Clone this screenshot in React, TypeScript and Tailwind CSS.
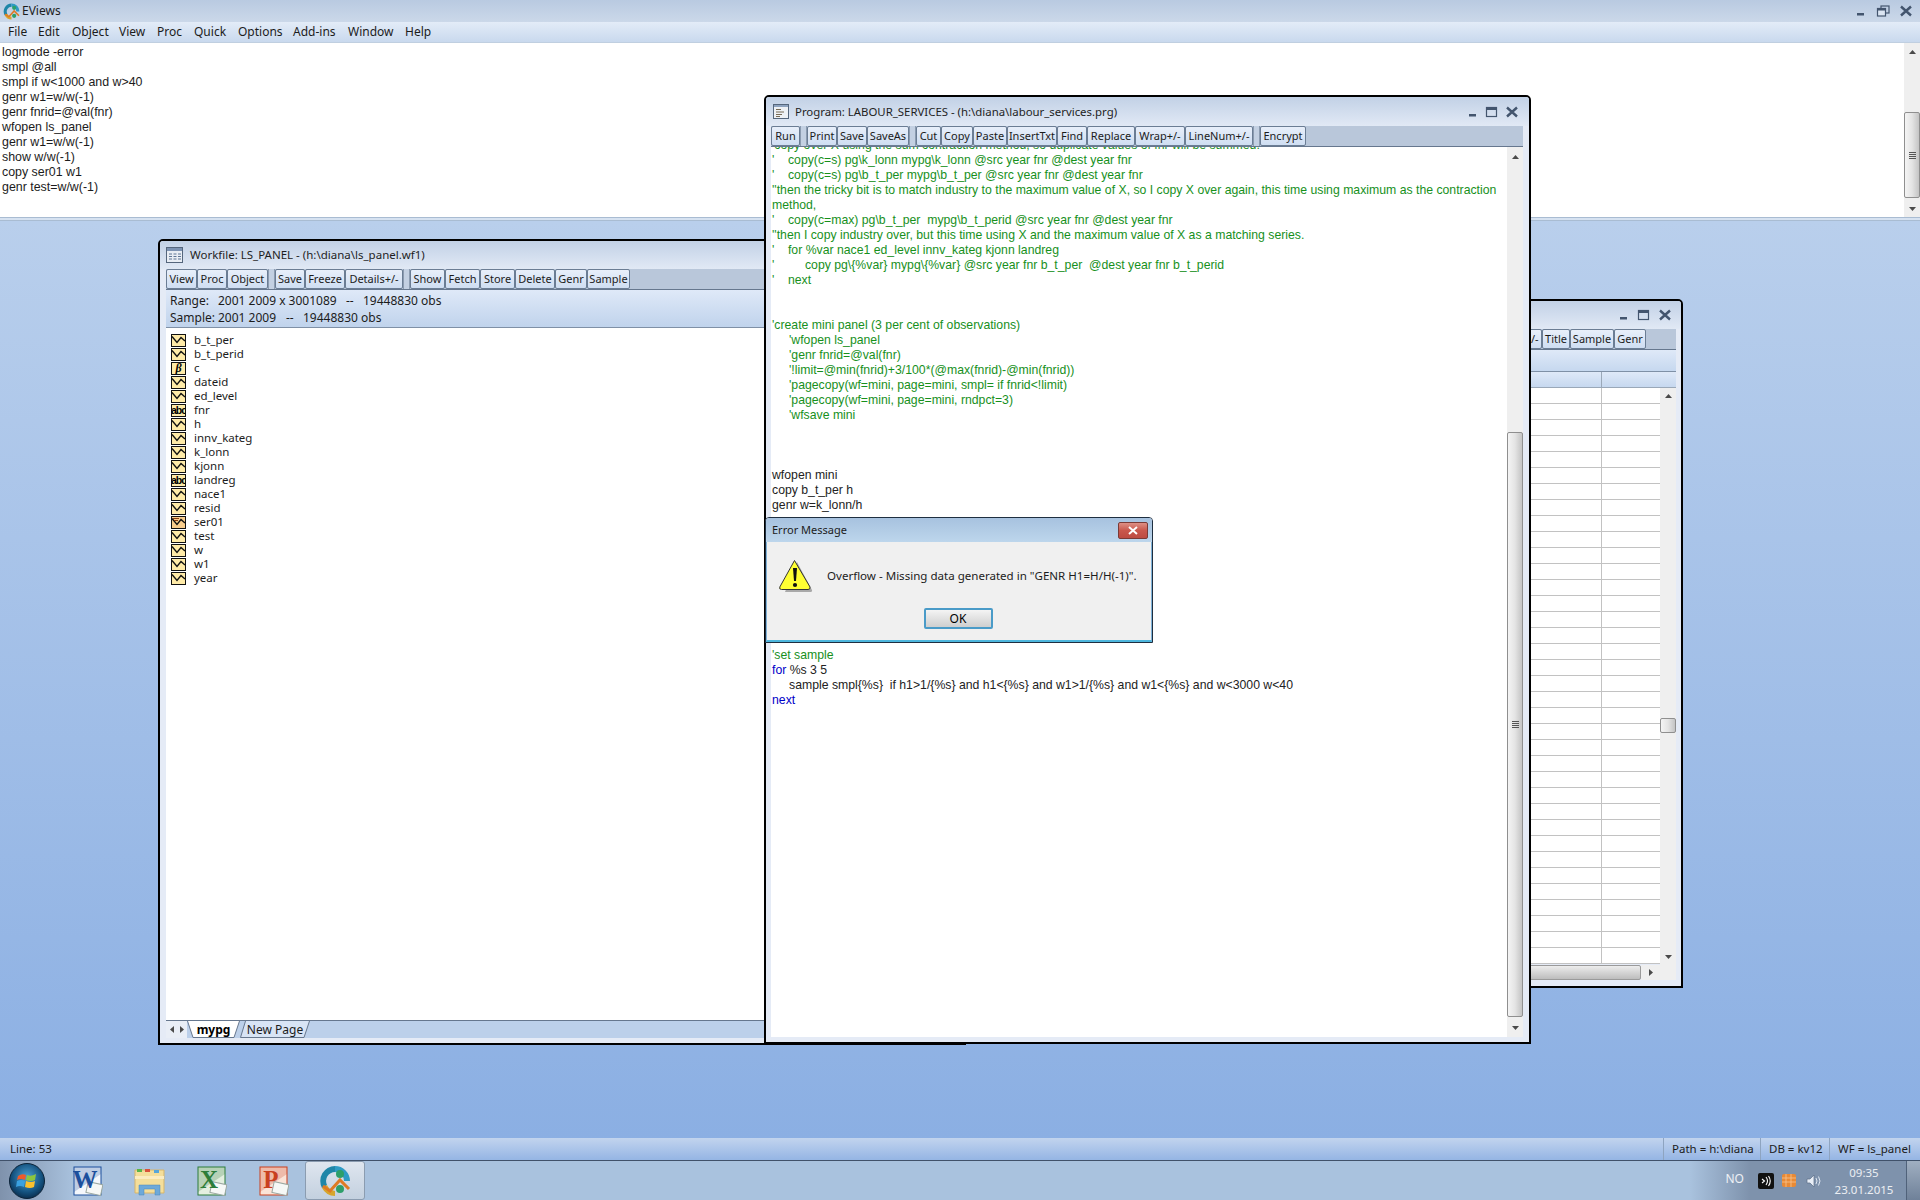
import type { FC, ReactNode } from "react";

const uiFont = "font-['Noto_Sans',sans-serif]";
const codeFont = "font-['Liberation_Sans',sans-serif]";

const menuItems: [string, string][] = [
  ["File", "w-[30px]"],
  ["Edit", "w-[34px]"],
  ["Object", "w-[47px]"],
  ["View", "w-[38px]"],
  ["Proc", "w-[37px]"],
  ["Quick", "w-[44px]"],
  ["Options", "w-[55px]"],
  ["Add-ins", "w-[55px]"],
  ["Window", "w-[57px]"],
  ["Help", "w-[40px]"],
];

const consoleLines = [
  "logmode -error",
  "smpl @all",
  "smpl if w<1000 and w>40",
  "genr w1=w/w(-1)",
  "genr fnrid=@val(fnr)",
  "wfopen ls_panel",
  "genr w1=w/w(-1)",
  "show w/w(-1)",
  "copy ser01 w1",
  "genr test=w/w(-1)",
];

type Btn = [string, string] | "gap";

const workfileButtons: Btn[] = [
  ["View", "w-[31px]"],
  ["Proc", "w-[30px]"],
  ["Object", "w-[41px]"],
  "gap",
  ["Save", "w-[30px]"],
  ["Freeze", "w-[40px]"],
  ["Details+/-", "w-[58px]"],
  "gap",
  ["Show", "w-[35px]"],
  ["Fetch", "w-[35px]"],
  ["Store", "w-[35px]"],
  ["Delete", "w-[40px]"],
  ["Genr", "w-[32px]"],
  ["Sample", "w-[43px]"],
];

const programButtons: Btn[] = [
  ["Run", "w-[29px]"],
  "gap",
  ["Print", "w-[30px]"],
  ["Save", "w-[30px]"],
  ["SaveAs", "w-[42px]"],
  "gap",
  ["Cut", "w-[25px]"],
  ["Copy", "w-[32px]"],
  ["Paste", "w-[34px]"],
  ["InsertTxt", "w-[50px]"],
  ["Find", "w-[30px]"],
  ["Replace", "w-[48px]"],
  ["Wrap+/-", "w-[50px]"],
  ["LineNum+/-", "w-[68px]"],
  "gap",
  ["Encrypt", "w-[46px]"],
];

const backButtons: Btn[] = [
  ["Details+/-", "w-[56px]"],
  ["Title", "w-[28px]"],
  ["Sample", "w-[44px]"],
  ["Genr", "w-[32px]"],
];

const objects: [string, "series" | "coef" | "alpha" | "modified"][] = [
  ["b_t_per", "series"],
  ["b_t_perid", "series"],
  ["c", "coef"],
  ["dateid", "series"],
  ["ed_level", "series"],
  ["fnr", "alpha"],
  ["h", "series"],
  ["innv_kateg", "series"],
  ["k_lonn", "series"],
  ["kjonn", "series"],
  ["landreg", "alpha"],
  ["nace1", "series"],
  ["resid", "series"],
  ["ser01", "modified"],
  ["test", "series"],
  ["w", "series"],
  ["w1", "series"],
  ["year", "series"],
];

type CodeKind = "comment" | "plain" | "empty";

const codeLines: [string, CodeKind][] = [
  ["'copy over X using the sum contraction method, so duplicate values of fnr will be summed.", "comment"],
  ["'    copy(c=s) pg\\k_lonn mypg\\k_lonn @src year fnr @dest year fnr", "comment"],
  ["'    copy(c=s) pg\\b_t_per mypg\\b_t_per @src year fnr @dest year fnr", "comment"],
  ["''then the tricky bit is to match industry to the maximum value of X, so I copy X over again, this time using maximum as the contraction", "comment"],
  ["method,", "comment"],
  ["'    copy(c=max) pg\\b_t_per  mypg\\b_t_perid @src year fnr @dest year fnr", "comment"],
  ["''then I copy industry over, but this time using X and the maximum value of X as a matching series.", "comment"],
  ["'    for %var nace1 ed_level innv_kateg kjonn landreg", "comment"],
  ["'         copy pg\\{%var} mypg\\{%var} @src year fnr b_t_per  @dest year fnr b_t_perid", "comment"],
  ["'    next", "comment"],
  ["", "empty"],
  ["", "empty"],
  ["'create mini panel (3 per cent of observations)", "comment"],
  ["     'wfopen ls_panel", "comment"],
  ["     'genr fnrid=@val(fnr)", "comment"],
  ["     '!limit=@min(fnrid)+3/100*(@max(fnrid)-@min(fnrid))", "comment"],
  ["     'pagecopy(wf=mini, page=mini, smpl= if fnrid<!limit)", "comment"],
  ["     'pagecopy(wf=mini, page=mini, rndpct=3)", "comment"],
  ["     'wfsave mini", "comment"],
  ["", "empty"],
  ["", "empty"],
  ["", "empty"],
  ["wfopen mini", "plain"],
  ["copy b_t_per h", "plain"],
  ["genr w=k_lonn/h", "plain"],
  ["", "empty"],
  ["", "empty"],
  ["", "empty"],
  ["", "empty"],
  ["", "empty"],
  ["", "empty"],
  ["", "empty"],
  ["", "empty"],
  ["", "empty"],
  ["'set sample", "comment"],
];

const GripLines: FC = () => (
  <div className="flex flex-col gap-[1px] w-[7px]">
    <div className="h-[1px] bg-[#555]" />
    <div className="h-[1px] bg-[#555]" />
    <div className="h-[1px] bg-[#555]" />
    <div className="h-[1px] bg-[#555]" />
  </div>
);

const Arrow: FC<{ dir: "up" | "down" | "left" | "right" }> = ({ dir }) => {
  const pts = {
    up: "1,6 4.5,2 8,6",
    down: "1,3 8,3 4.5,7",
    left: "6,1 6,8 2,4.5",
    right: "3,1 3,8 7,4.5",
  }[dir];
  return (
    <svg width="9" height="9" viewBox="0 0 9 9">
      <polygon points={pts} fill="#4a4a4a" />
    </svg>
  );
};

// vertical scroll bar, the thumb spot is given as spacer + thumb classes
const VScroll: FC<{ arrowH: string; spacer: string; thumb: string; grip?: boolean }> = ({
  arrowH,
  spacer,
  thumb,
  grip = true,
}) => (
  <div className="w-[16px] shrink-0 flex flex-col bg-[#efefef]">
    <div className={`${arrowH} shrink-0 flex items-center justify-center`}>
      <Arrow dir="up" />
    </div>
    <div className={`${spacer} shrink-0`} />
    <div
      className={`${thumb} shrink-0 flex items-center justify-center border border-[#8f8f8f] rounded-[2px] bg-gradient-to-r from-[#f4f4f4] via-[#e4e4e4] to-[#c4c4c4]`}
    >
      {grip && <GripLines />}
    </div>
    <div className="flex-1" />
    <div className={`${arrowH} shrink-0 flex items-center justify-center`}>
      <Arrow dir="down" />
    </div>
  </div>
);

const WinControls: FC<{ maxRestore?: boolean; className: string }> = ({ maxRestore, className }) => (
  <div className={`flex items-center ${className}`}>
    <svg width="12" height="12" viewBox="0 0 12 12">
      <rect x="2" y="8" width="7" height="2.5" fill="#43556e" />
    </svg>
    <svg width="14" height="12" viewBox="0 0 14 12" className="ml-[6px]">
      {maxRestore ? (
        <>
          <rect x="5" y="1" width="8" height="7" fill="none" stroke="#43556e" strokeWidth="1.2" />
          <rect x="1.5" y="3.5" width="8" height="7.5" fill="#dbe5f2" stroke="#43556e" strokeWidth="1.2" />
          <rect x="1.5" y="3.5" width="8" height="2" fill="#43556e" />
        </>
      ) : (
        <>
          <rect x="1.5" y="1.5" width="10" height="9" fill="none" stroke="#43556e" strokeWidth="1.2" />
          <rect x="1.5" y="1.5" width="10" height="2.5" fill="#43556e" />
        </>
      )}
    </svg>
    <svg width="14" height="12" viewBox="0 0 14 12" className="ml-[6px]">
      <path d="M2 1.5 L12 10.5 M12 1.5 L2 10.5" stroke="#43556e" strokeWidth="2.4" />
    </svg>
  </div>
);

const Toolbar: FC<{ buttons: Btn[]; className?: string }> = ({ buttons, className = "" }) => (
  <div className={`h-[21px] shrink-0 flex items-stretch bg-[#b9c7da] border-b border-[#66778e] ${className}`}>
    {buttons.map((b, i) =>
      b === "gap" ? (
        <div key={i} className="w-[7px] shrink-0 border-x border-[#8b9bb0] bg-[#c3d0e2]" />
      ) : (
        <div
          key={i}
          className={`${b[1]} shrink-0 flex items-center justify-center overflow-hidden whitespace-nowrap rounded-[2px] border border-[#6b7d94] bg-gradient-to-b from-[#e8effa] to-[#cfdef2] text-[11px] text-[#1c1c1c] ${uiFont}`}
        >
          {b[0]}
        </div>
      ),
    )}
  </div>
);

const FileIcon: FC = () => (
  <svg width="17" height="16" viewBox="0 0 17 16">
    <rect x="0.5" y="0.5" width="16" height="15" fill="#e8edf4" stroke="#55667c" />
    <rect x="1" y="1" width="15" height="3" fill="#7d93b3" />
    <path d="M3 7h3M3 9.5h3M3 12h3M7.5 7h3M7.5 9.5h3M7.5 12h3M12 7h3M12 9.5h3M12 12h3" stroke="#5f7696" />
  </svg>
);

const ProgramIcon: FC = () => (
  <svg width="16" height="15" viewBox="0 0 16 15">
    <rect x="0.5" y="0.5" width="15" height="14" fill="#eef1f5" stroke="#55667c" />
    <rect x="1" y="1" width="14" height="2" fill="#8ea3bf" />
    <path d="M3 5.5h5M3 8h8M3 10.5h6M3 12.5h4" stroke="#776a55" />
  </svg>
);

const ObjectIcon: FC<{ kind: "series" | "coef" | "alpha" | "modified" }> = ({ kind }) => {
  if (kind === "series" || kind === "modified") {
    return (
      <svg width="15" height="13" viewBox="0 0 15 13" className="shrink-0">
        <rect x="0.5" y="0.5" width="14" height="12" fill={kind === "modified" ? "#f9cd8c" : "#ffeba8"} stroke="#111" />
        <path d="M1 2.5 L6 8.5 L10 3.5 L14 7" fill="none" stroke="#111" strokeWidth="1.4" />
        {kind === "modified" && <path d="M2 2.5h6M3 4.5h4" stroke="#8a3d10" />}
      </svg>
    );
  }
  return (
    <div
      className={`w-[15px] h-[13px] shrink-0 flex items-center justify-center overflow-hidden border border-[#111] bg-[#ffeba8] text-black font-bold leading-none ${
        kind === "coef"
          ? "text-[12px] font-['Liberation_Serif',serif] italic"
          : "text-[10.5px] font-['Liberation_Sans',sans-serif] tracking-[-1px]"
      }`}
    >
      {kind === "coef" ? "β" : "abc"}
    </div>
  );
};

const EViewsLogo: FC<{ size: number }> = ({ size }) => (
  <svg width={size} height={size} viewBox="0 0 32 32">
    <path d="M16 1 A15 15 0 0 0 3 23 L8 20 A9 9 0 0 1 16 7 Z" fill="#1f86a8" />
    <path d="M3 23 A15 15 0 0 0 16 31 L16 26 A10 10 0 0 1 8 20 Z" fill="#d7a52c" />
    <path d="M16 1 A15 15 0 0 1 31 16 L25 16 A9 9 0 0 0 16 7 Z" fill="#2e9bc4" />
    <circle cx="21" cy="9" r="4" fill="#2d9f6a" />
    <circle cx="21" cy="24" r="4" fill="#2d9f6a" />
    <path d="M4 21 L11 26 L21 15 L30 24" fill="none" stroke="#de7a24" strokeWidth="3" />
  </svg>
);

const OfficeIcon: FC<{ letter: string; color: string; light: string }> = ({ letter, color, light }) => (
  <svg width="30" height="30" viewBox="0 0 30 30">
    <rect x="1" y="1" width="27" height="28" fill={light} stroke={color} />
    <path d="M1 1 H28 V8 L1 26 Z" fill={color} opacity="0.25" />
    <rect x="14" y="17" width="15" height="11" fill="#f6f8f6" stroke="#9aa7a0" transform="rotate(12 21 22)" />
    <text x="12" y="22" textAnchor="middle" fontFamily="Liberation Serif, serif" fontWeight="700" fontSize="25" fill={color}>
      {letter}
    </text>
  </svg>
);

const FolderIcon: FC = () => (
  <svg width="32" height="30" viewBox="0 0 32 30">
    <path d="M1 4 H30 V27 H1 Z" fill="#f4de9a" stroke="#d6b56a" />
    <rect x="3" y="3" width="5" height="3" fill="#58b54a" />
    <rect x="11" y="3" width="5" height="3" fill="#d9523c" />
    <rect x="20" y="4" width="5" height="3" fill="#58a6d8" />
    <path d="M1 10 H30 V13 H1 Z" fill="#fbecc0" />
    <path d="M5 29 V19 H26 V29 H21 V23 H10 V29 Z" fill="#6ea9d9" stroke="#4a86b8" strokeWidth="0.5" />
  </svg>
);

const StartOrb: FC = () => (
  <svg width="36" height="36" viewBox="0 0 36 36">
    <defs>
      <radialGradient id="orb" cx="50%" cy="40%" r="60%">
        <stop offset="0%" stopColor="#4fa3d6" />
        <stop offset="70%" stopColor="#14527f" />
        <stop offset="100%" stopColor="#0b2f4f" />
      </radialGradient>
    </defs>
    <circle cx="18" cy="18" r="17.5" fill="url(#orb)" stroke="#0c2338" />
    <path d="M9 13 Q13 10 17 12 L16 17 Q12 15 8 17 Z" fill="#ef5a2a" />
    <path d="M18 12 Q22 14 27 11 L26 17 Q22 19 17 17 Z" fill="#8cc63f" />
    <path d="M8 18 Q12 16 16 18 L15 24 Q11 22 7 24 Z" fill="#3aa1e0" />
    <path d="M17 18 Q22 20 26 18 L25 24 Q21 26 16 24 Z" fill="#fbc02d" />
  </svg>
);

// sheet tab of the workfile, slanted edges are a small svg drawn behind the label
const PageTab: FC<{ label: string; width: number; d: string; fill: string; className: string }> = ({
  label,
  width,
  d,
  fill,
  className,
}) => (
  <div className={`relative shrink-0 flex items-center justify-center h-[17px] ${className}`} style={{ width }}>
    <svg width={width} height="17" className="absolute inset-0">
      <path d={d} fill={fill} stroke="#66778e" />
    </svg>
    <span className="relative">{label}</span>
  </div>
);

const Frame: FC<{ className: string; children: ReactNode }> = ({ className, children }) => (
  <div
    className={`absolute flex flex-col border-2 border-black rounded-t-[5px] bg-[#e5ebf6] overflow-hidden ${className}`}
  >
    {children}
  </div>
);

const WorkfileWindow: FC = () => (
  <Frame className="left-[158px] top-[18px] w-[808px] h-[806px]">
    <div className="h-[28px] shrink-0 flex items-center pl-[6px] bg-gradient-to-b from-[#c2d1e6] to-[#e1e9f5]">
      <FileIcon />
      <span className={`ml-[7px] text-[11.5px] text-[#1e1e1e] whitespace-nowrap ${uiFont}`}>
        Workfile: LS_PANEL - (h:\diana\ls_panel.wf1)
      </span>
    </div>
    <div className="flex-1 flex flex-col pl-[6px] pr-[6px] min-h-0">
      <Toolbar buttons={workfileButtons} />
      <div
        className={`h-[38px] shrink-0 flex flex-col justify-center pl-[4px] bg-gradient-to-b from-[#dfe9f8] to-[#c0d3ec] border-b border-[#7f90a6] text-[12px] leading-[17px] text-[#1c1c1c] ${uiFont}`}
      >
        <div className="flex whitespace-pre">
          <span className="w-[48px]">Range:</span>
          <span className="w-[128px]">2001 2009 x 3001089</span>
          <span className="w-[17px]">--</span>
          <span>19448830 obs</span>
        </div>
        <div className="flex whitespace-pre">
          <span className="w-[48px]">Sample:</span>
          <span className="w-[68px]">2001 2009</span>
          <span className="w-[17px]">--</span>
          <span>19448830 obs</span>
        </div>
      </div>
      <div className="flex-1 bg-white pt-[5px] pl-[5px] min-h-0">
        {objects.map(([name, kind]) => (
          <div key={name} className="h-[14px] flex items-center gap-[8px]">
            <ObjectIcon kind={kind} />
            <span className={`text-[11.5px] text-[#1c1c1c] ${uiFont}`}>{name}</span>
          </div>
        ))}
      </div>
      <div className="h-[18px] shrink-0 flex items-start bg-[#bcd0ea] border-t border-[#66778e]">
        <div className="w-[21px] h-[17px] shrink-0 flex items-center justify-center bg-[#e9eef6]">
          <Arrow dir="left" />
          <Arrow dir="right" />
        </div>
        <PageTab
          label="mypg"
          width={53}
          d="M0.5 0 L6 16.5 H47 L52.5 0"
          fill="#ffffff"
          className={`text-[12px] font-bold text-black ${uiFont}`}
        />
        <PageTab
          label="New Page"
          width={70}
          d="M5.5 0 L0.5 16.5 H64 L69.5 0"
          fill="#d8e4f5"
          className={`text-[12px] text-[#1c1c1c] ${uiFont}`}
        />
      </div>
      <div className="h-[5px] shrink-0" />
    </div>
  </Frame>
);

const BackWindow: FC = () => (
  <Frame className="left-[1000px] top-[78px] w-[683px] h-[689px]">
    <div className="h-[28px] shrink-0 flex items-center justify-end bg-gradient-to-b from-[#c2d1e6] to-[#e1e9f5]">
      <WinControls className="pr-[9px] gap-[1px]" />
    </div>
    <div className="flex-1 flex flex-col pl-[6px] pr-[5px] min-h-0">
      <Toolbar buttons={backButtons} className="justify-end pr-[30px]" />
      <div className="h-[22px] shrink-0 bg-gradient-to-b from-[#dfe9f8] to-[#c6d8ef] border-b border-[#7f90a6]" />
      <div className="h-[16px] shrink-0 flex bg-gradient-to-b from-[#dfe9f8] to-[#c6d8ef] border-b border-[#9aa8b8]">
        <div className="flex-1 border-r border-[#9aa8b8]" />
        <div className="w-[74px]" />
      </div>
      <div className="flex-1 flex min-h-0">
        <div className="flex-1 flex flex-col min-w-0">
          {Array.from({ length: 36 }, (_, i) => (
            <div key={i} className="h-[16px] shrink-0 flex bg-white border-b border-[#c2c2c2]">
              <div className="flex-1 border-r border-[#c2c2c2]" />
              <div className="w-[58px]" />
            </div>
          ))}
        </div>
        <VScroll arrowH="h-[17px]" spacer="h-[313px]" thumb="h-[15px]" grip={false} />
      </div>
      <div className="h-[15px] shrink-0 flex">
        <div className="flex-1 rounded-[2px] border border-[#9a9a9a] bg-gradient-to-b from-[#ededed] to-[#bdbdbd]" />
        <div className="w-[19px] flex items-center justify-center bg-[#efefef]">
          <Arrow dir="right" />
        </div>
        <div className="w-[16px] bg-[#efefef]" />
      </div>
      <div className="h-[6px] shrink-0" />
    </div>
  </Frame>
);

const ProgramWindow: FC = () => (
  <Frame className="left-[764px] top-[-126px] w-[767px] h-[949px]">
    <div className="h-[29px] shrink-0 flex items-center pl-[7px] bg-gradient-to-b from-[#c2d1e6] to-[#e1e9f5]">
      <ProgramIcon />
      <span className={`ml-[6px] text-[11.4px] text-[#1e1e1e] whitespace-nowrap ${uiFont}`}>
        Program: LABOUR_SERVICES - (h:\diana\labour_services.prg)
      </span>
      <WinControls className="ml-auto pr-[10px]" />
    </div>
    <div className="flex-1 flex flex-col pl-[5px] pr-[6px] min-h-0">
      <Toolbar buttons={programButtons} />
      <div className="flex-1 flex min-h-0">
        <div className={`flex-1 bg-white overflow-hidden pl-[1px] text-[12.25px] leading-[15px] whitespace-pre ${codeFont}`}>
          <div className="mt-[-9px]">
            {codeLines.map(([text, kind], i) => (
              <div key={i} className={`h-[15px] ${kind === "comment" ? "text-[#17901c]" : "text-[#222]"}`}>
                {text}
              </div>
            ))}
            <div className="h-[15px] text-[#222]">
              <span className="text-[#0000c8]">for</span> %s 3 5
            </div>
            <div className="h-[15px] text-[#222]">
              {"     sample smpl{%s}  if h1>1/{%s} and h1<{%s} and w1>1/{%s} and w1<{%s} and w<3000 w<40"}
            </div>
            <div className="h-[15px] text-[#0000c8]">next</div>
          </div>
        </div>
        <VScroll arrowH="h-[21px]" spacer="h-[264px]" thumb="h-[585px]" />
      </div>
      <div className="h-[5px] shrink-0" />
    </div>
  </Frame>
);

const ErrorDialog: FC = () => (
  <div className="absolute left-[765px] top-[296px] w-[388px] h-[126px] flex flex-col border border-[#1f2f40] rounded-t-[4px] overflow-hidden bg-[#f0f0f0]">
    <div className="h-[24px] shrink-0 flex items-center pl-[6px] bg-gradient-to-b from-[#a7c2df] to-[#bdd6ec]">
      <span className={`text-[11px] text-[#1c1c1c] ${uiFont}`}>Error Message</span>
      <div className="ml-auto mr-[4px] w-[30px] h-[17px] flex items-center justify-center rounded-[2px] border border-[#7b3a36] bg-gradient-to-b from-[#dd8f85] via-[#c9574c] to-[#bd4b42]">
        <svg width="10" height="9" viewBox="0 0 10 9">
          <path d="M1 1 L9 8 M9 1 L1 8" stroke="#fff" strokeWidth="2" />
        </svg>
      </div>
    </div>
    <div className="flex-1 flex flex-col items-stretch border-x border-b-2 border-x-[#7fb2d8] border-b-[#4db6dd]">
      <div className="flex items-center pl-[12px] pt-[17px]">
        <svg width="34" height="34" viewBox="0 0 34 34" className="shrink-0">
          <path d="M18 3 L33 31 Q33.5 33 31 33 L6 33 Z" fill="#8a8a8a" opacity="0.7" />
          <path d="M15.5 1.5 L31 28 Q31.5 30.5 29 30.5 L2.5 30.5 Q0 30.5 0.8 28 Z" fill="#ffff33" stroke="#333" />
          <path d="M14 9 H18 L17 22 H15 Z" fill="#111" />
          <circle cx="16" cy="26" r="2.1" fill="#111" />
        </svg>
        <span className={`ml-[14px] text-[11.55px] text-[#1c1c1c] whitespace-nowrap ${uiFont}`}>
          Overflow - Missing data generated in "GENR H1=H/H(-1)".
        </span>
      </div>
      <div className="mt-[15px] flex justify-center pr-[2px]">
        <div
          className={`w-[69px] h-[21px] flex items-center justify-center rounded-[2px] border-2 border-[#4a9bc8] bg-gradient-to-b from-[#f4f4f4] to-[#cfcfcf] text-[12px] text-black ${uiFont}`}
        >
          OK
        </div>
      </div>
    </div>
  </div>
);

const App: FC = () => (
  <div className={`w-[1920px] h-[1200px] flex flex-col overflow-hidden ${uiFont}`}>
    <div className="h-[22px] shrink-0 flex items-center pl-[3px] bg-gradient-to-b from-[#b9cae1] to-[#cbd8e9]">
      <EViewsLogo size={17} />
      <span className="ml-[2px] text-[12px] text-[#1c1c1c]">EViews</span>
      <WinControls maxRestore className="ml-auto pr-[7px] gap-[3px]" />
    </div>
    <div className="h-[21px] shrink-0 flex items-center pl-[8px] bg-gradient-to-b from-[#e3ecf8] to-[#c9d9ee] border-b border-[#c0cfe0]">
      {menuItems.map(([label, width]) => (
        <span key={label} className={`${width} text-[12px] text-[#1c1c1c]`}>
          {label}
        </span>
      ))}
    </div>
    <div className="h-[174px] shrink-0 flex bg-white">
      <div className={`flex-1 pt-[2px] pl-[2px] text-[12.4px] leading-[15px] text-[#1c1c1c] ${codeFont}`}>
        {consoleLines.map((line, i) => (
          <div key={i}>{line}</div>
        ))}
      </div>
      <VScroll arrowH="h-[18px]" spacer="h-[51px]" thumb="h-[86px]" />
    </div>
    <div className="h-[4px] shrink-0 bg-[#d6e2f1] border-y border-[#a9bcd2]" />

    <div className="relative flex-1 z-10 bg-gradient-to-b from-[#b9cfec] to-[#8bafe3]">
      <BackWindow />
      <WorkfileWindow />
      <ProgramWindow />
      <ErrorDialog />
    </div>

    <div className="h-[22px] shrink-0 flex items-stretch bg-gradient-to-b from-[#c2d4ee] to-[#95b5e4] text-[11.5px] text-[#1c1c1c]">
      <div className="flex-1 pl-[10px] flex items-center">Line: 53</div>
      <div className="w-[97px] pl-[8px] flex items-center border-l border-[#8ea4c0]">Path = h:\diana</div>
      <div className="w-[69px] pl-[8px] flex items-center border-l border-[#8ea4c0]">DB = kv12</div>
      <div className="w-[91px] pl-[8px] flex items-center border-l border-[#8ea4c0]">WF = ls_panel</div>
    </div>

    <div className="h-[40px] shrink-0 flex items-center border-t border-[#40516a] bg-[linear-gradient(90deg,#7f92ac_0,#a9c2de_75px,#a9c2de_1690px,#7e92ac_1750px,#7e92ac_100%)]">
      <div className="w-[57px] shrink-0 pl-[9px] flex items-center">
        <StartOrb />
      </div>
      <div className="w-[62px] shrink-0 flex justify-center">
        <OfficeIcon letter="W" color="#1c4f9c" light="#f4f7fc" />
      </div>
      <div className="w-[62px] shrink-0 flex justify-center">
        <FolderIcon />
      </div>
      <div className="w-[62px] shrink-0 flex justify-center">
        <OfficeIcon letter="X" color="#2e7d3a" light="#e4efe0" />
      </div>
      <div className="w-[62px] shrink-0 flex justify-center">
        <OfficeIcon letter="P" color="#c9401f" light="#fbe4d8" />
      </div>
      <div className="w-[60px] h-[39px] shrink-0 flex items-center justify-center rounded-[3px] border border-[#8b9cb0] bg-gradient-to-b from-[#dfe6ef] to-[#c3d0df]">
        <EViewsLogo size={32} />
      </div>
      <div className="ml-auto flex items-center h-full text-white/85">
        <span className="text-[12px] mr-[14px] mb-[4px]">NO</span>
        <svg width="16" height="16" viewBox="0 0 16 16">
          <rect width="16" height="16" rx="2" fill="#111" />
          <path d="M4 6 L6.5 8 L4 10 M8 4 Q11 8 8 12 M10.5 3 Q14 8 10.5 13" fill="none" stroke="#fff" strokeWidth="1.1" />
        </svg>
        <svg width="14" height="13" viewBox="0 0 14 13" className="ml-[8px]">
          <rect width="14" height="13" rx="2" fill="#e98a35" />
          <path d="M0 4h14M0 8h14M4 0v13M9 0v13" stroke="#f7c48f" strokeWidth="0.8" />
        </svg>
        <svg width="16" height="14" viewBox="0 0 16 14" className="ml-[10px]">
          <path d="M1 5 H4 L8 1 V13 L4 9 H1 Z" fill="#e8eef6" stroke="#5b6f88" strokeWidth="0.7" />
          <path d="M10 4 Q12 7 10 10 M12.5 2.5 Q15.5 7 12.5 11.5" fill="none" stroke="#dfe7f2" />
        </svg>
        <div className="w-[84px] flex flex-col items-center text-[11.5px] leading-[17px] pl-[4px] pr-[4px]">
          <span>09:35</span>
          <span>23.01.2015</span>
        </div>
        <div className="w-[14px] h-full border-l border-[#50627a] bg-gradient-to-b from-[#a0afc1] to-[#6f8199]" />
      </div>
    </div>
  </div>
);

export default App;
